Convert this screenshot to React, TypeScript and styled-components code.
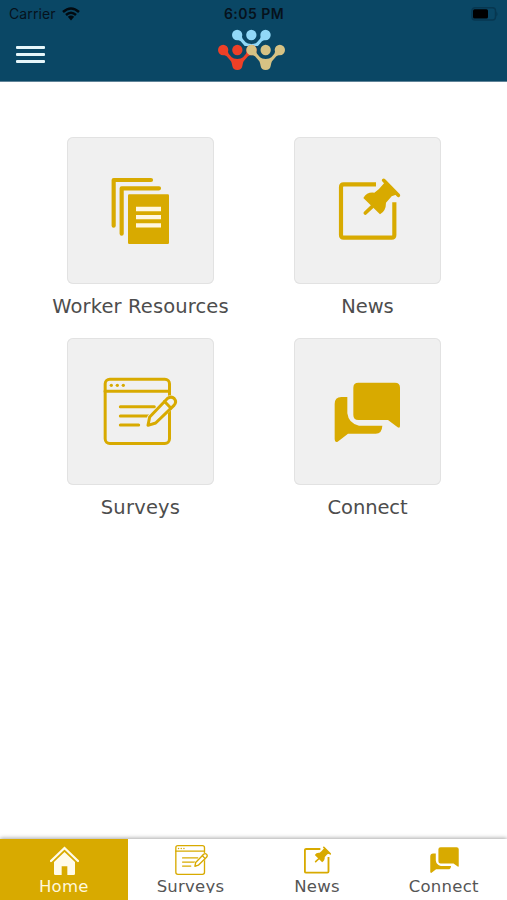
import React from "react";
import styled, { createGlobalStyle } from "styled-components";

const GOLD = "#d8aa00";
const NAVY = "#0a4765";

const GlobalStyle = createGlobalStyle`
  * { box-sizing: border-box; }
  body { margin: 0; background: #fff; }
`;

const Screen = styled.div`
  display: flex;
  flex-direction: column;
  width: 507px;
  height: 900px;
  overflow: hidden;
  background: #fff;
  font-family: "DejaVu Sans", Verdana, sans-serif;
`;

const Header = styled.header`
  height: 82px;
  flex: none;
  background: ${NAVY};
  border-bottom: 1px solid #5f8398;
`;

const StatusBar = styled.div`
  display: grid;
  grid-template-columns: 1fr auto 1fr;
  align-items: center;
  height: 27px;
  padding: 0 8px 0 9px;
  color: #06121c;
  font-family: Inter, "Liberation Sans", sans-serif;
  font-size: 14px;
`;

const Carrier = styled.div`
  display: flex;
  align-items: center;
  gap: 6px;
  letter-spacing: 0.1px;
`;

const Clock = styled.div`
  font-weight: 600;
  letter-spacing: 0.45px;
`;

const BatterySlot = styled.div`
  display: flex;
  justify-content: flex-end;
`;

const Toolbar = styled.div`
  display: grid;
  grid-template-columns: 1fr auto 1fr;
  height: 54px;
  padding-top: 1px;
`;

const MenuButton = styled.button`
  display: flex;
  flex-direction: column;
  gap: 4px;
  width: 45px;
  padding: 18px 0 0 16px;
  border: 0;
  background: none;
`;

const MenuLine = styled.span`
  width: 29px;
  height: 3px;
  border-radius: 1px;
  background: #e6f6fa;
`;

const LogoSlot = styled.div`
  height: 44px;
  margin-left: -3px;
  svg { display: block; }
`;

const TileGrid = styled.main`
  flex: 1;
  display: grid;
  grid-template-columns: 227px 227px;
  grid-auto-rows: 201px;
  padding: 55px 0 0 27px;
`;

const TileLink = styled.a`
  display: flex;
  flex-direction: column;
  align-items: center;
  color: #4d4d4d;
`;

const TileBox = styled.div`
  width: 147px;
  height: 147px;
  flex: none;
  border-radius: 6px;
  background: #f0f0f0;
  box-shadow: inset 0 0 0 1px #e2e2e2;
  svg { display: block; }
`;

const TileLabel = styled.span<{ $spacing: number }>`
  margin-top: 11px;
  font-size: 19.5px;
  line-height: 24px;
  white-space: nowrap;
  letter-spacing: ${(p) => p.$spacing}px;
`;

const TabBar = styled.nav`
  display: grid;
  grid-template-columns: 127.5px 126px 127px 126.5px;
  height: 61px;
  flex: none;
  background: #fff;
  box-shadow: 0 -1px 4px rgba(0, 0, 0, 0.34);
`;

const Tab = styled.a<{ $active?: boolean }>`
  display: flex;
  flex-direction: column;
  align-items: center;
  color: ${(p) => (p.$active ? "#fff8dc" : "#555")};
  background: ${(p) => (p.$active ? GOLD : "#fff")};
`;

const TabIcon = styled.div`
  display: flex;
  align-items: center;
  height: 30px;
  margin-top: 6px;
  padding-left: 1px;
`;

const TabLabel = styled.span`
  height: 17px;
  margin-top: 1px;
  overflow: hidden;
  font-size: 16.5px;
  line-height: 21px;
  letter-spacing: 0.25px;
  white-space: nowrap;
`;

type IconProps = { width: number; height: number; viewBox: string };

const DocumentsIcon = (p: IconProps) => (
  <svg {...p} fill="none" stroke={GOLD} strokeLinejoin="round">
    <path d="M191 287V150H303M215 311V175H327" strokeWidth="12.5" strokeLinecap="round" />
    <rect x="234" y="193" width="123" height="149" rx="4" fill={GOLD} stroke="none" />
    <path d="M258 237H333M258 261.500H333M258 286H333" stroke="#fff7e0" strokeWidth="13" />
  </svg>
);

const PinIcon = (p: IconProps) => (
  <svg {...p} fill="none" stroke={GOLD} strokeLinejoin="round">
    <path d="M288 163H191Q183 163 183 171V315Q183 323 191 323H335Q343 323 343 315V217" strokeWidth="12.500" />
    <path d="M311 151L355 196" strokeWidth="11" strokeLinecap="round" />
    <path d="M316 155L297 177L283 188Q261 185 250 204L300 253Q318 243 318 218L335 199L352 193Z" fill={GOLD} stroke="none" />
    <path d="M277 229L256 249" strokeWidth="11" strokeLinecap="round" />
  </svg>
);

const SurveyIcon = ({ cutout, ...p }: IconProps & { cutout: string }) => (
  <svg {...p} fill="none" stroke={GOLD} strokeWidth="9" strokeLinecap="round" strokeLinejoin="round">
    <rect x="165.500" y="147.500" width="193" height="193" rx="14" />
    <path d="M165 184H358M211 230H313M211 258H296M211 285H266" />
    <path d="M290 288L296 260L353 203Q364 196 374 205Q382 215 373 226L317 281Z" fill={cutout} stroke={cutout} strokeWidth="8" />
    <path d="M294 286L299 261L353 205Q364 197 373 206Q381 215 372 226L317 279ZM343 214L363 235" />
    <g fill={GOLD} stroke="none">
      <circle cx="184" cy="166" r="5" />
      <circle cx="202" cy="166" r="5" />
      <circle cx="220" cy="166" r="5" />
    </g>
  </svg>
);

const ChatIcon = (p: IconProps) => (
  <svg {...p} fill={GOLD}>
    <path d="M235 158H345Q360 158 360 173V288Q360 296 353 292L324 270H235Q220 270 220 255V173Q220 158 235 158Z" />
    <path d="M202 201V250Q206 281 237 287H307Q306 311 287 311H204L173 335Q164 338 164 328V222Q164 201 184 201Z" />
  </svg>
);

const HomeIcon = () => (
  <svg width="29" height="29" viewBox="150 48 87 87" fill="none">
    <path d="M153 93L193.500 54L234 93" stroke="#fffbea" strokeWidth="7" strokeLinecap="round" />
    <path d="M193.500 66L225 96V131Q225 135 221 135H202V109H185V135H166Q162 135 162 131V96Z" fill="#fffbea" />
  </svg>
);

const WifiIcon = () => (
  <svg width="18" height="14" viewBox="0 0 18 14" fill="none" stroke="#020a10" strokeWidth="2.500">
    <path d="M1 5Q9-2 17 5M4 8Q9 3.400 14 8" />
    <path d="M5.800 9.800Q9 7.200 12.200 9.800L9 13.400Z" fill="#020a10" stroke="none" />
  </svg>
);

const BatteryIcon = () => (
  <svg width="28" height="14" viewBox="0 0 28 14">
    <rect x="1" y=".7" width="23.500" height="12.300" rx="3" fill="none" stroke="#073750" strokeWidth="1.400" />
    <rect x="2" y="2.300" width="15" height="9.200" rx="1.500" fill="#000" />
    <path d="M25.300 4.400Q27.700 7 25.300 9.600Z" fill="#073750" />
  </svg>
);

const Figure = ({ x, y, color }: { x: number; y: number; color: string }) => (
  <g transform={`translate(${x} ${y})`} fill={color}>
    <circle cx="-42.500" cy="0" r="15.500" />
    <circle cx="0" cy="0" r="15.500" />
    <circle cx="42.500" cy="0" r="15.500" />
    <path d="M-46 14Q-37 14-32 19L-19 34Q-16 40-15 48Q-13 60 0 60Q13 60 15 48Q16 40 19 34L32 19Q37 14 46 14L30-6Q30 5 26 11L17 22Q12 27 0 27Q-12 27-17 22L-26 11Q-30 5-30-6Z" />
  </g>
);

const Logo = () => (
  <svg width="70" height="44" viewBox="52 84 210 132">
    <defs>
      <clipPath id="upper"><path d="M90 80H220V132H190L177 138H133L120 132H90Z" /></clipPath>
    </defs>
    <g clipPath="url(#upper)"><Figure x={155} y={105} color="#91d8f7" /></g>
    <Figure x={113} y={150} color="#ee4027" />
    <Figure x={198} y={150} color="#d6c284" />
  </svg>
);

export default function App() {
  return (
    <Screen>
      <GlobalStyle />
      <Header>
        <StatusBar>
          <Carrier>Carrier<WifiIcon /></Carrier>
          <Clock>6:05 PM</Clock>
          <BatterySlot><BatteryIcon /></BatterySlot>
        </StatusBar>
        <Toolbar>
          <MenuButton aria-label="Menu"><MenuLine /><MenuLine /><MenuLine /></MenuButton>
          <LogoSlot><Logo /></LogoSlot>
        </Toolbar>
      </Header>
      <TileGrid>
        <TileLink>
          <TileBox><DocumentsIcon width={147} height={147} viewBox="51 21 441 441" /></TileBox>
          <TileLabel $spacing={0.13}>Worker Resources</TileLabel>
        </TileLink>
        <TileLink>
          <TileBox><PinIcon width={147} height={147} viewBox="42 21 441 441" /></TileBox>
          <TileLabel $spacing={-0.1}>News</TileLabel>
        </TileLink>
        <TileLink>
          <TileBox><SurveyIcon cutout="#f0f0f0" width={147} height={147} viewBox="51 24 441 441" /></TileBox>
          <TileLabel $spacing={0.2}>Surveys</TileLabel>
        </TileLink>
        <TileLink>
          <TileBox><ChatIcon width={147} height={147} viewBox="42 24 441 441" /></TileBox>
          <TileLabel $spacing={-0.1}>Connect</TileLabel>
        </TileLink>
      </TileGrid>
      <TabBar>
        <Tab $active><TabIcon><HomeIcon /></TabIcon><TabLabel>Home</TabLabel></Tab>
        <Tab><TabIcon><SurveyIcon cutout="#fff" width={33} height={30} viewBox="161 143 220 202" /></TabIcon><TabLabel>Surveys</TabLabel></Tab>
        <Tab><TabIcon><PinIcon width={27} height={28} viewBox="177 145 183 185" /></TabIcon><TabLabel>News</TabLabel></Tab>
        <Tab><TabIcon><ChatIcon width={29} height={26} viewBox="163 157 198 179" /></TabIcon><TabLabel>Connect</TabLabel></Tab>
      </TabBar>
    </Screen>
  );
}
